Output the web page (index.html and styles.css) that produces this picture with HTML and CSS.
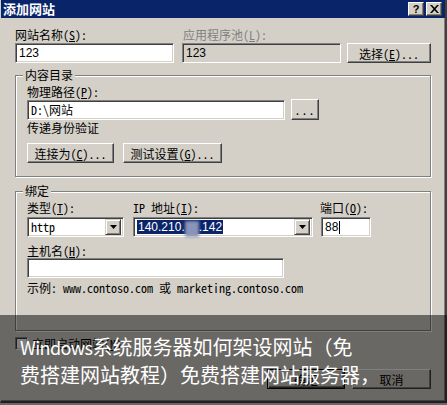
FILE: index.html
```html
<!DOCTYPE html>
<html lang="zh-CN">
<head>
<meta charset="utf-8">
<title>添加网站</title>
<link rel="stylesheet" href="styles.css">
</head>
<body>
<div class="screen">
  <div class="window">
    <div class="titlebar">
      <span class="title">添加网站</span>
      <div class="caps">
        <span class="cap">?</span>
        <span class="cap cap-x">
          <svg width="9" height="8" viewBox="0 0 9 8"><path d="M0 0h2l2.5 2.7L7 0h2L5.5 4 9 8H7L4.5 5.3 2 8H0l3.5-4z" fill="#000"/></svg>
        </span>
      </div>
    </div>
    <div class="content">
      <div class="row1">
        <div class="field f-name">
          <span class="lbl">网站名称(<u>S</u>):</span>
          <div class="input sans">123</div>
        </div>
        <div class="field f-pool">
          <span class="lbl disabled">应用程序池(<u>L</u>):</span>
          <div class="input input-dis sans">123</div>
        </div>
        <div class="btn btn-select">选择(<u>E</u>)...</div>
      </div>

      <div class="group g1">
        <span class="legend">内容目录</span>
        <span class="lbl">物理路径(<u>P</u>):</span>
        <div class="path-row">
          <div class="input input-path">D:\网站</div>
          <div class="btn btn-dots">...</div>
        </div>
        <span class="lbl lbl-auth">传递身份验证</span>
        <div class="btn-row">
          <div class="btn btn-connect">连接为(<u>C</u>)...</div>
          <div class="btn btn-test">测试设置(<u>G</u>)...</div>
        </div>
      </div>

      <div class="group g2">
        <span class="legend">绑定</span>
        <div class="bind-row">
          <div class="field f-type">
            <span class="lbl">类型(<u>T</u>):</span>
            <div class="input select">
              <span class="sel-text">http</span>
              <span class="drop"><svg width="7" height="4" viewBox="0 0 7 4"><path d="M0 0h7L3.5 4z" fill="#000"/></svg></span>
            </div>
          </div>
          <div class="field f-ip">
            <span class="lbl">IP 地址(<u>I</u>):</span>
            <div class="input select">
              <span class="sel-text sans"><span class="hl">140.210.<span class="blur"></span>.142</span></span>
              <span class="drop"><svg width="7" height="4" viewBox="0 0 7 4"><path d="M0 0h7L3.5 4z" fill="#000"/></svg></span>
            </div>
          </div>
          <div class="field f-port">
            <span class="lbl">端口(<u>O</u>):</span>
            <div class="input sans">88<span class="caret"></span></div>
          </div>
        </div>
        <span class="lbl lbl-host">主机名(<u>H</u>):</span>
        <div class="input input-host"></div>
        <span class="lbl lbl-example">示例: www.contoso.com 或 marketing.contoso.com</span>
      </div>

      <div class="check-row">
        <span class="checkbox"></span>
        <span class="lbl">立即启动网站(<u>M</u>)</span>
      </div>
      <div class="foot-row">
        <div class="btn btn-ok">确定</div>
        <div class="btn btn-cancel">取消</div>
      </div>
    </div>
  </div>
  <div class="caption"><span class="latin">Windows</span>系统服务器如何架设网站（免<br>费搭建网站教程）免费搭建网站服务器，</div>
</div>
</body>
</html>
```

FILE: styles.css
```css
* { box-sizing: border-box; }
html, body { margin: 0; padding: 0; }
body {
  width: 447px;
  height: 405px;
  overflow: hidden;
  background: #d4d0c8;
  font-family: "Noto Sans Mono CJK SC", "Noto Sans CJK SC", "Liberation Mono", monospace;
  font-size: 12px;
  color: #000;
}
u { text-decoration: underline; text-underline-offset: 1px; }
.sans { font-family: "Liberation Sans", "Noto Sans CJK SC", sans-serif; }

.screen { position: relative; width: 447px; height: 405px; }

.window {
  width: 447px;
  height: 403px;
  border-left: 1px solid #d4d0c8;
  border-right: 2px solid #404040;
  border-bottom: 2px solid #404040;
  box-shadow: inset -1px -1px 0 #808080;
}

.titlebar {
  height: 18px;
  background: #0a246a;
  display: flex;
  align-items: center;
  justify-content: space-between;
  padding: 0 3px 0 2px;
}
.title {
  color: #fff;
  font-family: "Noto Sans CJK SC", sans-serif;
  font-weight: 700;
  font-size: 13px;
  line-height: 18px;
}
.caps { display: flex; gap: 2px; align-items: center; }
.cap {
  width: 16px;
  height: 14px;
  background: #d4d0c8;
  border: 1px solid;
  border-color: #fff #404040 #404040 #fff;
  box-shadow: inset -1px -1px 0 #808080;
  display: flex;
  align-items: center;
  justify-content: center;
  font-family: "Liberation Sans", sans-serif;
  font-weight: 700;
  font-size: 11px;
  line-height: 12px;
}

.content { padding: 10px 14px 0 14px; }

.lbl { display: block; height: 14px; line-height: 14px; white-space: nowrap; }
.lbl.disabled { color: #808080; }

.field { display: flex; flex-direction: column; }
.field .lbl { margin-bottom: 1px; }

.input {
  height: 20px;
  background: #fff;
  border: 1px solid;
  border-color: #808080 #fff #fff #808080;
  box-shadow: inset 1px 1px 0 #404040, inset -1px -1px 0 #d4d0c8;
  padding: 0 3px;
  line-height: 18px;
  white-space: nowrap;
  display: flex;
  align-items: center;
}
.input-dis { background: #d4d0c8; }

.btn {
  height: 20px;
  background: #d4d0c8;
  border: 1px solid;
  border-color: #fff #404040 #404040 #fff;
  box-shadow: inset -1px -1px 0 #808080;
  display: flex;
  align-items: center;
  justify-content: center;
  white-space: nowrap;
}

.row1 { display: flex; align-items: flex-end; }
.f-name { width: 159px; }
.f-pool { width: 159px; margin-left: 8px; }
.f-pool .lbl { padding-left: 1px; }
.btn-select { width: 84px; margin-left: 6px; }

.group {
  position: relative;
  border: 1px solid #808080;
  box-shadow: inset 1px 1px 0 #fff, 1px 1px 0 #fff;
}
.legend {
  position: absolute;
  top: -8px;
  left: 7px;
  padding: 0 2px;
  background: #d4d0c8;
  line-height: 14px;
}

.g1 {
  margin-top: 12px;
  height: 102px;
  padding: 9px 0 0 11px;
}
.path-row { display: flex; align-items: flex-end; height: 21px; }
.input-path { width: 258px; }
.btn-dots { width: 28px; height: 21px; margin-left: 6px; letter-spacing: 1px; }
.lbl-auth { margin-top: 1px; }
.btn-row { display: flex; margin-top: 8px; }
.btn-connect { width: 87px; }
.btn-test { width: 99px; margin-left: 9px; }

.g2 {
  margin-top: 14px;
  height: 140px;
  padding: 9px 0 0 11px;
}
.bind-row { display: flex; }
.bind-row .field .lbl { margin-bottom: 2px; }
.f-type { width: 97px; }
.f-ip { width: 180px; margin-left: 9px; }
.f-port { width: 50px; margin-left: 8px; }
.f-port .lbl { margin-left: -1px; }

.select { justify-content: space-between; padding: 0 2px 0 2px; }
.sel-text { padding-left: 1px; }
.drop {
  width: 16px;
  height: 16px;
  background: #d4d0c8;
  border: 1px solid;
  border-color: #d4d0c8 #404040 #404040 #d4d0c8;
  box-shadow: inset 1px 1px 0 #fff, inset -1px -1px 0 #808080;
  display: flex;
  align-items: center;
  justify-content: center;
}
.hl {
  display: inline-flex;
  align-items: center;
  height: 14px;
  background: #0a246a;
  color: #fff;
  padding: 0 1px;
}
.blur {
  display: inline-block;
  width: 14px;
  height: 16px;
  margin-top: 4px;
  background: #8a93b8;
  filter: blur(1.5px);
}
.caret {
  display: inline-block;
  width: 1px;
  height: 13px;
  background: #000;
  margin-left: 1px;
}

.lbl-host { margin-top: 7px; }
.input-host { width: 257px; }
.lbl-example { margin-top: 3px; }

.check-row { display: flex; align-items: center; margin-top: 6px; height: 13px; }
.checkbox {
  width: 13px;
  height: 13px;
  background: #fff;
  border: 1px solid;
  border-color: #808080 #fff #fff #808080;
  box-shadow: inset 1px 1px 0 #404040, inset -1px -1px 0 #d4d0c8;
  margin-right: 4px;
}
.foot-row { display: flex; justify-content: flex-end; margin-top: 19px; }
.btn-ok {
  width: 78px;
  border: 1px solid #000;
  box-shadow: inset 1px 1px 0 #fff, inset -1px -1px 0 #404040, inset -2px -2px 0 #808080;
}
.btn-cancel { width: 79px; margin-left: 7px; }

.caption {
  position: absolute;
  left: 0;
  top: 315px;
  width: 447px;
  height: 90px;
  background: rgba(0, 0, 0, 0.5);
  color: #fff;
  font-family: "Noto Sans CJK SC", sans-serif;
  font-size: 20px;
  line-height: 27px;
  padding: 18px 0 0 20px;
  white-space: nowrap;
}
.caption .latin { font-size: 18px; letter-spacing: -0.6px; }
```
